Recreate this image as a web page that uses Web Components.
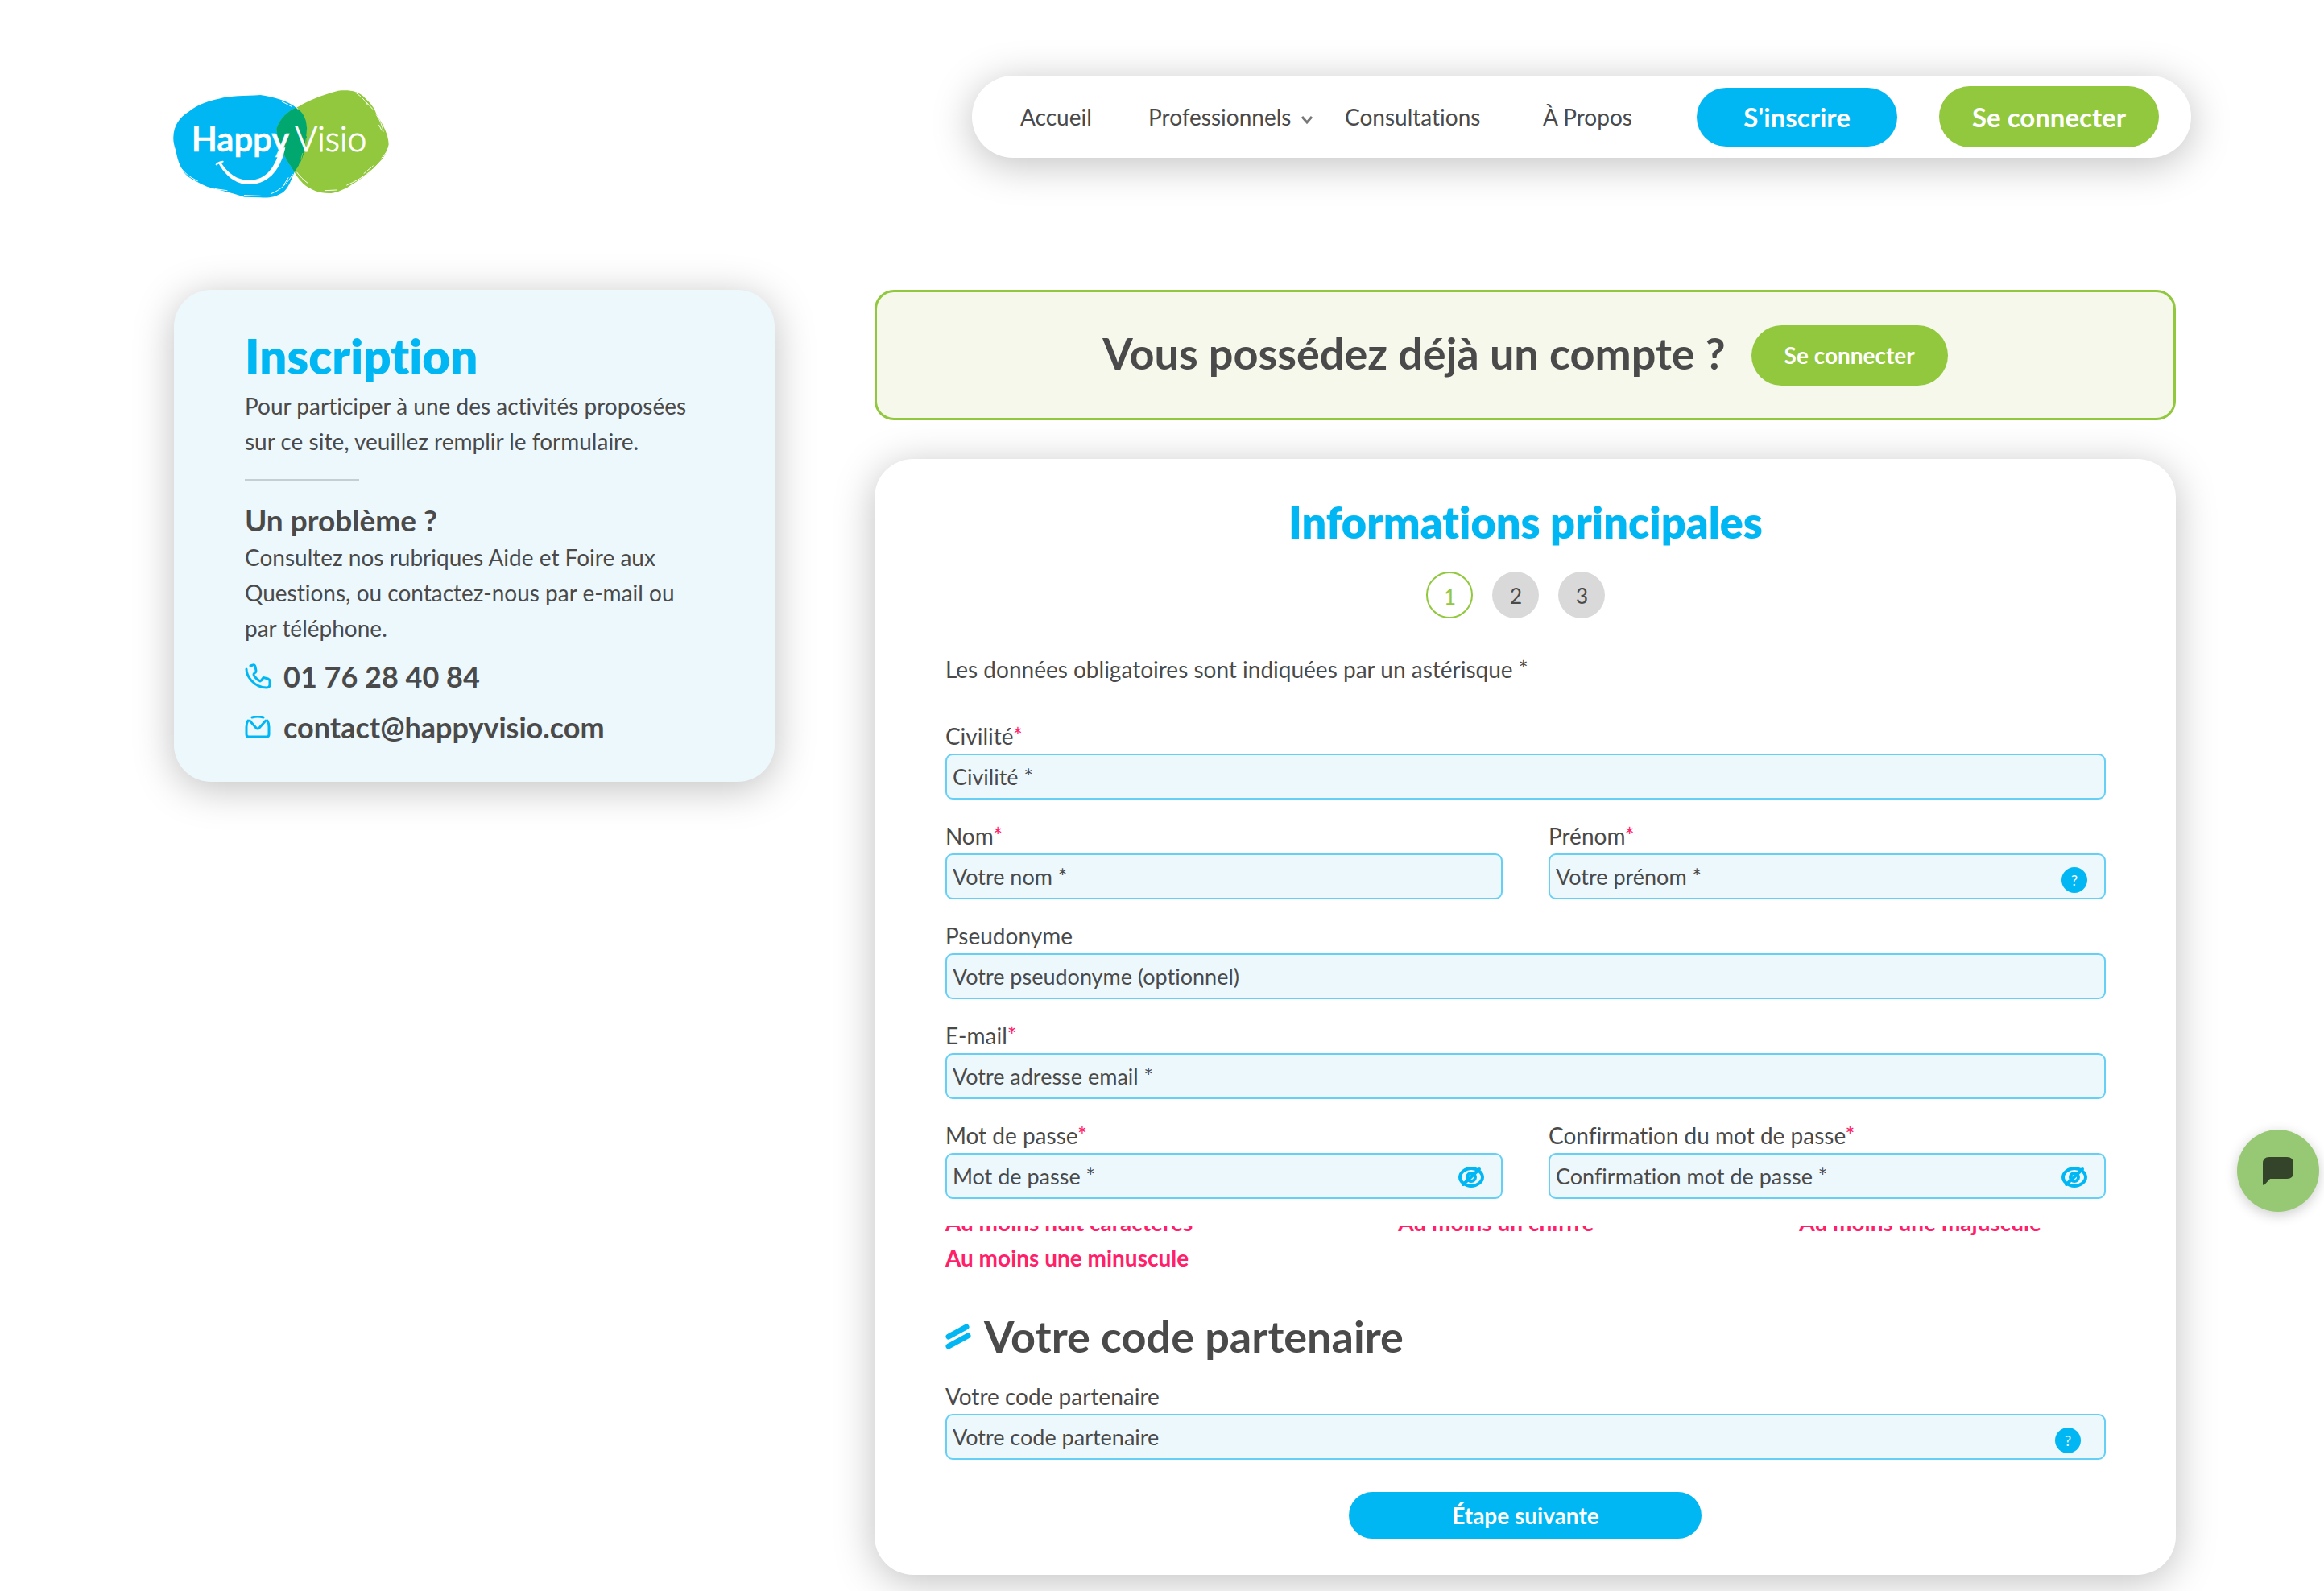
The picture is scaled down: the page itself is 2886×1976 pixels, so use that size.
<!DOCTYPE html>
<html lang="fr">

<head>
    <meta charset="UTF-8">
    <meta name="viewport" content="width=device-width, initial-scale=1.0">
    <title>HappyVisio - Inscription</title>
    <style>
        :root {
            --blue: #00b7f4;
            --green: #91c83e;
            --text: #4a4a4a;
            --pale: #edf8fd;
            --pink: #ff2069;
            --shadow: 0 8px 50px rgba(0, 0, 0, 0.25);
        }

        body {
            margin: 0;
            background: white;
            color: var(--text);
            font-family: Lato, "Open Sans", sans-serif;
            font-size: 28px;
            font-variant-ligatures: no-common-ligatures;
            line-height: 44px;
        }

        main {
            display: grid;
            grid-template-columns: 6fr 13fr;
            column-gap: 124px;
            align-items: start;
            padding: 113px 184px 20px 216px;
        }

        .content {
            display: grid;
            row-gap: 48px;
        }
    </style>
</head>

<body>
    <hv-header></hv-header>
    <main>
        <hv-aside>
            <span slot="title">Inscription</span>
            <span slot="intro">Pour participer à une des activités proposées sur ce site, veuillez remplir le formulaire.</span>
            <span slot="help-title">Un problème ?</span>
            <span slot="help">Consultez nos rubriques Aide et Foire aux Questions, ou contactez-nous par e-mail ou par téléphone.</span>
        </hv-aside>
        <div class="content">
            <hv-banner>Vous possédez déjà un compte ?</hv-banner>
            <hv-form></hv-form>
        </div>
    </main>
    <hv-chat></hv-chat>

    <template id="hv-header">
        <style>
            :host {
                display: flex;
                justify-content: space-between;
                align-items: flex-start;
                padding: 94px 165px 0 215px;
            }

            .logo {
                display: block;
                margin-top: 16px;
                height: 137px;
            }

            nav {
                display: grid;
                grid-template-columns: 159px 244px 246px 191px 301px 273px;
                align-items: center;
                box-sizing: border-box;
                height: 102px;
                padding: 0 40px 0 60px;
                border-radius: 51px;
                background: white;
                box-shadow: var(--shadow);
            }

            .link {
                display: flex;
                align-items: center;
                gap: 12px;
                color: inherit;
                text-decoration: none;
            }

            .link svg {
                margin-top: 8px;
            }
        </style>
        <a class="logo" href="#" aria-label="HappyVisio">
            <svg width="268" height="137" viewBox="75 60 804 411">
                <defs>
                    <path id="blue" d="M76 240C78 200 95 170 135 145C165 120 200 108 245 98C290 86 340 88 400 84C450 92 500 104 535 132C562 150 574 180 574 215C574 270 560 330 528 368C515 400 505 430 485 446C455 466 430 468 400 466L340 464C320 456 280 446 235 434C200 428 165 410 130 388C105 365 92 330 85 290C78 270 75 255 76 240Z"/>
                    <path id="green" d="M460 210C472 170 505 140 540 128C580 104 630 84 690 68C730 64 765 68 790 95C810 115 825 130 832 155C855 190 877 230 878 268C872 300 860 318 838 340C810 375 770 400 725 428C700 440 680 450 655 450C620 450 590 440 560 415C540 395 528 375 515 352C490 318 464 260 460 210Z"/>
                    <clipPath id="over"><use href="#blue"/></clipPath>
                </defs>
                <use href="#blue" fill="#00b7f4"/>
                <use href="#green" fill="#91c83e"/>
                <use href="#green" fill="#00a76f" clip-path="url(#over)"/>
                <g fill="none" stroke="white" stroke-width="3" stroke-linecap="round">
                    <path d="M472 96C500 106 520 116 540 136M480 108L518 128M756 76C778 92 790 104 800 122M790 106L818 136M832 158C846 178 854 196 858 220M842 196L852 216M876 282C870 296 866 304 852 318"/>
                    <path d="M846 334C810 372 780 394 722 420M820 348L786 376M520 380C500 414 478 436 440 452M504 392L488 418M100 350C116 374 136 390 166 404M232 434L276 440M340 458L400 460M536 372C548 388 560 400 576 412M640 440L684 438"/>
                </g>
                <path d="M572 178C578 220 570 250 564 290M558 300L540 362" fill="none" stroke="#91c83e" stroke-width="3" stroke-dasharray="26 8"/>
                <text x="143" y="294" font-family="Lato, sans-serif" font-weight="600" font-size="126" fill="white" stroke="white" stroke-width="2">Happy</text>
                <text x="529" y="294" font-family="Lato, sans-serif" font-weight="300" font-size="128" fill="white" stroke="white" stroke-width="3">Visio</text>
                <path d="M493 280C478 350 440 417 358 417C306 417 268 382 244 338L252 334C278 376 314 402 358 402C424 402 458 348 474 280Z" fill="white"/>
                <path d="M236 343Q244 334 260 332" fill="none" stroke="white" stroke-width="6" stroke-linecap="round"/>
            </svg>
        </a>
        <nav>
            <a class="link" href="#">Accueil</a>
            <a class="link" href="#">Professionnels
                <svg width="16" height="12" viewBox="0 0 16 12" fill="none" stroke="#777" stroke-width="3"><path d="M2 2L8 9L14 2"/></svg>
            </a>
            <a class="link" href="#">Consultations</a>
            <a class="link" href="#">À Propos</a>
            <hv-button style="--width: 249px; --height: 73px; --size: 33px">S'inscrire</hv-button>
            <hv-button color="green" style="--width: 273px; --height: 76px; --size: 33px">Se connecter</hv-button>
        </nav>
    </template>

    <template id="hv-button">
        <style>
            :host {
                display: block;
            }

            button {
                display: block;
                width: var(--width, 244px);
                height: var(--height, 75px);
                padding: 0;
                border: none;
                border-radius: 38px;
                background: var(--blue);
                color: white;
                font-family: inherit;
                font-size: var(--size, 28px);
                font-weight: 700;
                cursor: pointer;
            }

            :host([color="green"]) button {
                background: var(--green);
            }
        </style>
        <button type="button"><slot></slot></button>
    </template>

    <template id="hv-aside">
        <style>
            :host {
                display: block;
                padding: 46px 88px 46px;
                border-radius: 46px;
                background: var(--pale);
                box-shadow: var(--shadow);
            }

            h1, h2, p, hr {
                margin: 0;
            }

            h1 {
                margin-bottom: 4px;
                color: var(--blue);
                font-size: 60px;
                font-weight: 800;
                line-height: 72px;
            }

            hr {
                width: 142px;
                height: 3px;
                margin: 25px 0 26px;
                border: none;
                background: #c3cfd2;
            }

            h2 {
                margin-bottom: 2px;
                font-size: 37px;
                line-height: 44px;
            }

            address {
                display: grid;
                row-gap: 19px;
                margin-top: 16px;
                font-style: normal;
            }

            address a {
                display: flex;
                align-items: center;
                gap: 16px;
                color: inherit;
                font-size: 36px;
                font-weight: 700;
                text-decoration: none;
            }
        </style>
        <h1><slot name="title"></slot></h1>
        <p><slot name="intro"></slot></p>
        <hr>
        <h2><slot name="help-title"></slot></h2>
        <p><slot name="help"></slot></p>
        <address>
            <a href="tel:0176284084">
                <svg width="32" height="32" viewBox="0 0 32 32" fill="none" stroke="#00b7f4" stroke-width="3" stroke-linejoin="round" stroke-linecap="round">
                    <path d="M7 3L10 2Q12 1 13 4L14 9Q14 11 12 12Q10 13 12 16Q15 20 19 22Q21 21 22 19Q23 17 25 18L29 19Q31 20 31 22V26Q31 30 27 30Q16 30 8 21Q2 14 2 7"/>
                </svg>
                01 76 28 40 84
            </a>
            <a href="mailto:contact@happyvisio.com">
                <svg width="32" height="28" viewBox="0 0 32 28" fill="none" stroke="#00b7f4" stroke-width="3" stroke-linejoin="round" stroke-linecap="round">
                    <path d="M9 2Q16 0 23 2M4 6Q2 9 2 14V23Q2 26 5 26H27Q30 26 30 23V14Q30 9 28 6"/>
                    <path d="M6 6L14 15Q16 17 18 15L26 6"/>
                </svg>
                contact@happyvisio.com
            </a>
        </address>
    </template>

    <template id="hv-banner">
        <style>
            :host {
                display: flex;
                justify-content: center;
                align-items: center;
                gap: 32px;
                box-sizing: border-box;
                height: 162px;
                border: 3px solid var(--green);
                border-radius: 24px;
                background: #f5f8eb;
            }

            h2 {
                margin: 0 0 4px;
                font-size: 54px;
                font-weight: 700;
                line-height: 64px;
            }
        </style>
        <h2><slot></slot></h2>
        <hv-button color="green">Se connecter</hv-button>
    </template>

    <template id="hv-field">
        <style>
            :host {
                display: block;
                flex: 1;
                min-width: 0;
            }

            label {
                display: block;
                margin-bottom: 2px;
                line-height: 40px;
            }

            label span {
                color: var(--pink);
            }

            .box {
                display: flex;
                align-items: center;
                box-sizing: border-box;
                height: 57px;
                padding-right: var(--end, 21px);
                border: 2px solid #66cff5;
                border-radius: 9px;
                background: var(--pale);
            }

            input, select {
                flex: 1;
                min-width: 0;
                height: 100%;
                margin: 0;
                padding: 0 0 0 7px;
                border: none;
                outline: none;
                appearance: none;
                background: none;
                color: inherit;
                font: inherit;
                font-size: 27px;
            }

            ::placeholder {
                color: inherit;
                opacity: 1;
            }

            .box button {
                display: none;
                flex: none;
                width: 32px;
                height: 32px;
                padding: 0;
                border: none;
                background: none;
                cursor: pointer;
            }

            :host([icon="help"]) .help {
                display: block;
                margin-top: 8px;
                border-radius: 16px;
                background: var(--blue);
                color: white;
                font-family: inherit;
                font-size: 18px;
                line-height: 32px;
            }

            :host([icon="eye"]) .eye {
                display: block;
            }

            .eye svg {
                display: block;
            }
        </style>
        <label for="control"><slot></slot></label>
        <div class="box">
            <input id="control">
            <button class="help" type="button">?</button>
            <button class="eye" type="button" aria-label="Afficher">
                <svg width="32" height="32" viewBox="0 0 32 32" fill="none" stroke="#00b7f4" stroke-width="4" stroke-linecap="round">
                    <path d="M2 17C2 11 9 6 16 6S30 11 30 17S23 28 16 28S2 23 2 17Z"/>
                    <ellipse cx="16" cy="17" rx="5" ry="5"/>
                    <path d="M26 7L6 26"/>
                </svg>
            </button>
        </div>
    </template>

    <template id="hv-form">
        <style>
            :host {
                display: block;
                padding: 47px 87px 45px 88px;
                border-radius: 48px;
                background: white;
                box-shadow: var(--shadow);
            }

            h2, h3, p, ol, ul {
                margin: 0;
                padding: 0;
                list-style: none;
            }

            h2, h3 {
                font-size: 54px;
                line-height: 64px;
            }

            h2 {
                color: var(--blue);
                font-weight: 800;
                text-align: center;
            }

            .steps {
                display: flex;
                justify-content: center;
                margin: 29px 0 41px;
            }

            .steps li {
                box-sizing: border-box;
                width: 58px;
                height: 58px;
                margin-right: 24px;
                border-radius: 50%;
                background: #d9d9d9;
                font-size: 26px;
                line-height: 60px;
                text-align: center;
            }

            .steps .current {
                border: 2px solid var(--green);
                background: white;
                color: var(--green);
                line-height: 58px;
            }

            .fields {
                display: grid;
                row-gap: 25px;
                margin-top: 41px;
            }

            .row {
                display: flex;
                gap: 57px;
            }

            /* the first line of rules slides under the top edge */
            .rules {
                overflow: hidden;
                margin-top: 34px;
            }

            .rules ul {
                display: flex;
                flex-wrap: wrap;
                justify-content: space-between;
                margin-top: -27px;
                padding-right: 80px;
                column-gap: 200px;
                color: var(--pink);
                font-weight: 700;
            }

            h3 {
                display: flex;
                align-items: center;
                gap: 16px;
                margin: 44px 0 22px;
                font-weight: 700;
            }

            .next {
                display: flex;
                justify-content: center;
                margin-top: 40px;
            }
        </style>
        <h2>Informations principales</h2>
        <ol class="steps">
            <li class="current">1</li>
            <li>2</li>
            <li>3</li>
        </ol>
        <p>Les données obligatoires sont indiquées par un astérisque *</p>
        <div class="fields">
            <hv-field type="select" required placeholder="Civilité *">Civilité</hv-field>
            <div class="row">
                <hv-field required placeholder="Votre nom *">Nom</hv-field>
                <hv-field required placeholder="Votre prénom *" icon="help">Prénom</hv-field>
            </div>
            <hv-field placeholder="Votre pseudonyme (optionnel)">Pseudonyme</hv-field>
            <hv-field type="email" required placeholder="Votre adresse email *">E-mail</hv-field>
            <div class="row">
                <hv-field type="password" required placeholder="Mot de passe *" icon="eye">Mot de passe</hv-field>
                <hv-field type="password" required placeholder="Confirmation mot de passe *" icon="eye">Confirmation du mot de passe</hv-field>
            </div>
        </div>
        <div class="rules">
            <ul>
                <li>Au moins huit caractères</li>
                <li>Au moins un chiffre</li>
                <li>Au moins une majuscule</li>
                <li>Au moins une minuscule</li>
            </ul>
        </div>
        <h3>
            <svg width="32" height="32" viewBox="0 0 32 32" fill="none" stroke="#00b7f4" stroke-width="7" stroke-linecap="round">
                <path d="M4 16L26 4M4 28L28 15"/>
            </svg>
            Votre code partenaire
        </h3>
        <hv-field placeholder="Votre code partenaire" icon="help" style="--end: 29px">Votre code partenaire</hv-field>
        <div class="next">
            <hv-button style="--width: 438px; --height: 58px">Étape suivante</hv-button>
        </div>
    </template>

    <template id="hv-chat">
        <style>
            /* floats over the page, near the right edge */
            :host {
                position: fixed;
                right: 6px;
                bottom: 471px;
            }

            button {
                display: flex;
                justify-content: center;
                align-items: center;
                width: 102px;
                height: 102px;
                padding: 0;
                border: none;
                border-radius: 50%;
                background: #97c975;
                box-shadow: 0 4px 16px rgba(0, 0, 0, 0.2);
                cursor: pointer;
            }
        </style>
        <button type="button" aria-label="Chat">
            <svg width="38" height="35" viewBox="0 0 38 35"><path d="M8 0H30Q38 0 38 8V19Q38 27 30 27H9L2 34.500Q0 36 0 33V8Q0 0 8 0Z" fill="#34442a"/></svg>
        </button>
    </template>
</body>
<script>

class HvElement extends HTMLElement {
    constructor() {
        super();
        const shadow = this.attachShadow({mode: 'open'});
        const template = document.getElementById(this.localName).content;
        shadow.appendChild(template.cloneNode(true));
    }
}

class HvField extends HvElement {
    connectedCallback() {
        const shadow = this.shadowRoot;
        const placeholder = this.getAttribute('placeholder');
        const type = this.getAttribute('type') || 'text';
        let control = shadow.getElementById('control');

        if (type === 'select') {
            const select = document.createElement('select');
            select.id = 'control';
            select.add(new Option(placeholder, ''));
            select.add(new Option('Madame', 'f'));
            select.add(new Option('Monsieur', 'm'));
            control.replaceWith(select);
            control = select;
        } else {
            control.type = type;
            control.placeholder = placeholder;
        }

        if (this.hasAttribute('required')) {
            control.required = true;
            const star = document.createElement('span');
            star.textContent = '*';
            shadow.querySelector('label').append(star);
        }

        shadow.querySelector('.eye').addEventListener('click', () => {
            control.type = control.type === 'password' ? 'text' : 'password';
        });
    }
}

customElements.define('hv-button', class extends HvElement {});
customElements.define('hv-field', HvField);
customElements.define('hv-header', class extends HvElement {});
customElements.define('hv-aside', class extends HvElement {});
customElements.define('hv-banner', class extends HvElement {});
customElements.define('hv-form', class extends HvElement {});
customElements.define('hv-chat', class extends HvElement {});
</script>

</html>
